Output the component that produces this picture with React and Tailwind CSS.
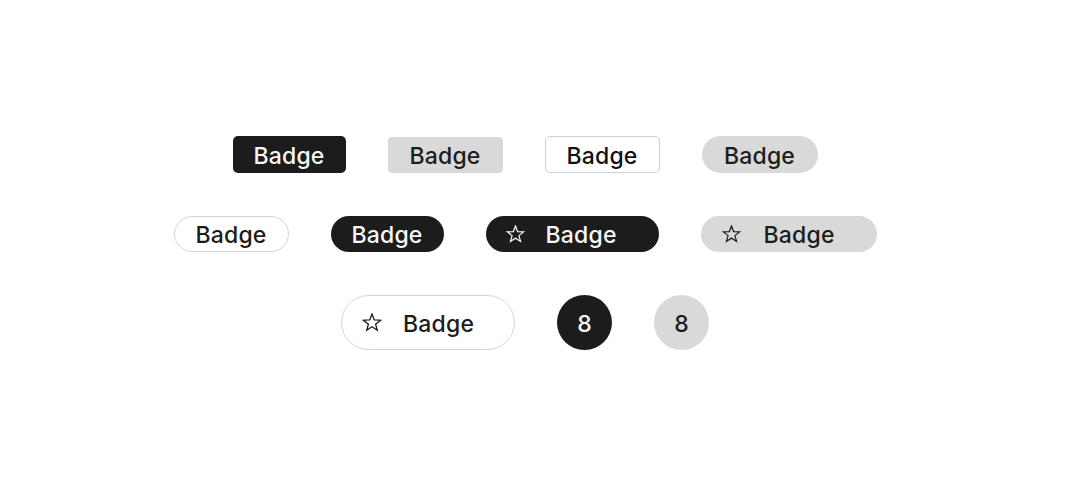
import React from 'react';

function Star({ className }) {
    return (
        <svg viewBox="0 0 20 20" className={className} fill="none" stroke="currentColor" strokeWidth="1.3" strokeLinejoin="miter">
            <polygon points="10,1 12.23,6.93 18.56,7.22 13.61,11.17 15.29,17.28 10,13.8 4.71,17.28 6.39,11.17 1.44,7.22 7.77,6.93" />
        </svg>
    );
}

const base = 'inline-flex items-center justify-center box-border pt-[3px] text-[23px] leading-none font-medium tracking-[0.2px]';

export default function App() {
    return (
        <div
            className="flex h-[478px] w-full flex-col items-center justify-center gap-[43px] bg-white pt-[8px] pr-[42px]"
            style={{ fontFamily: 'Inter, "Noto Sans", sans-serif' }}
        >
            <div className="flex items-center gap-[42px]">
                <span className={`${base} h-[37px] w-[113px] rounded-[5px] bg-[#1c1c1c] text-[#f7f7f7]`}>Badge</span>
                <span className={`${base} h-[36px] w-[115px] rounded-[4px] bg-[#d9d9d9] text-[#1c1c1c]`}>Badge</span>
                <span className={`${base} h-[37px] w-[115px] rounded-[5px] border border-[#cfcfcf] bg-white text-[#111]`}>Badge</span>
                <span className={`${base} h-[37px] w-[116px] rounded-full bg-[#d9d9d9] text-[#1c1c1c]`}>Badge</span>
            </div>
            <div className="flex items-center gap-[42px]">
                <span className={`${base} h-[36px] w-[115px] rounded-full border border-[#d4d4d4] bg-white text-[#1c1c1c]`}>Badge</span>
                <span className={`${base} h-[36px] w-[113px] rounded-full bg-[#1c1c1c] text-[#f7f7f7]`}>Badge</span>
                <span className={`${base} h-[36px] w-[173px] justify-start gap-[21px] rounded-full bg-[#1c1c1c] pl-[20px] text-[#f7f7f7]`}>
                    <Star className="-mt-[2px] size-[19px]" />
                    Badge
                </span>
                <span className={`${base} h-[36px] w-[176px] justify-start gap-[23px] rounded-full bg-[#d9d9d9] pl-[21px] text-[#1c1c1c]`}>
                    <Star className="-mt-[2px] size-[19px]" />
                    Badge
                </span>
            </div>
            <div className="flex items-center gap-[42px]">
                <span className={`${base} h-[55px] w-[174px] justify-start gap-[21px] rounded-full border border-[#d4d4d4] bg-white pl-[20px] text-[#1c1c1c]`}>
                    <Star className="-mt-[2px] size-[20px]" />
                    Badge
                </span>
                <span className={`${base} size-[55px] rounded-full bg-[#1c1c1c] text-[#f7f7f7]`}>8</span>
                <span className={`${base} size-[55px] rounded-full bg-[#d9d9d9] text-[#1c1c1c]`}>8</span>
            </div>
        </div>
    );
}
